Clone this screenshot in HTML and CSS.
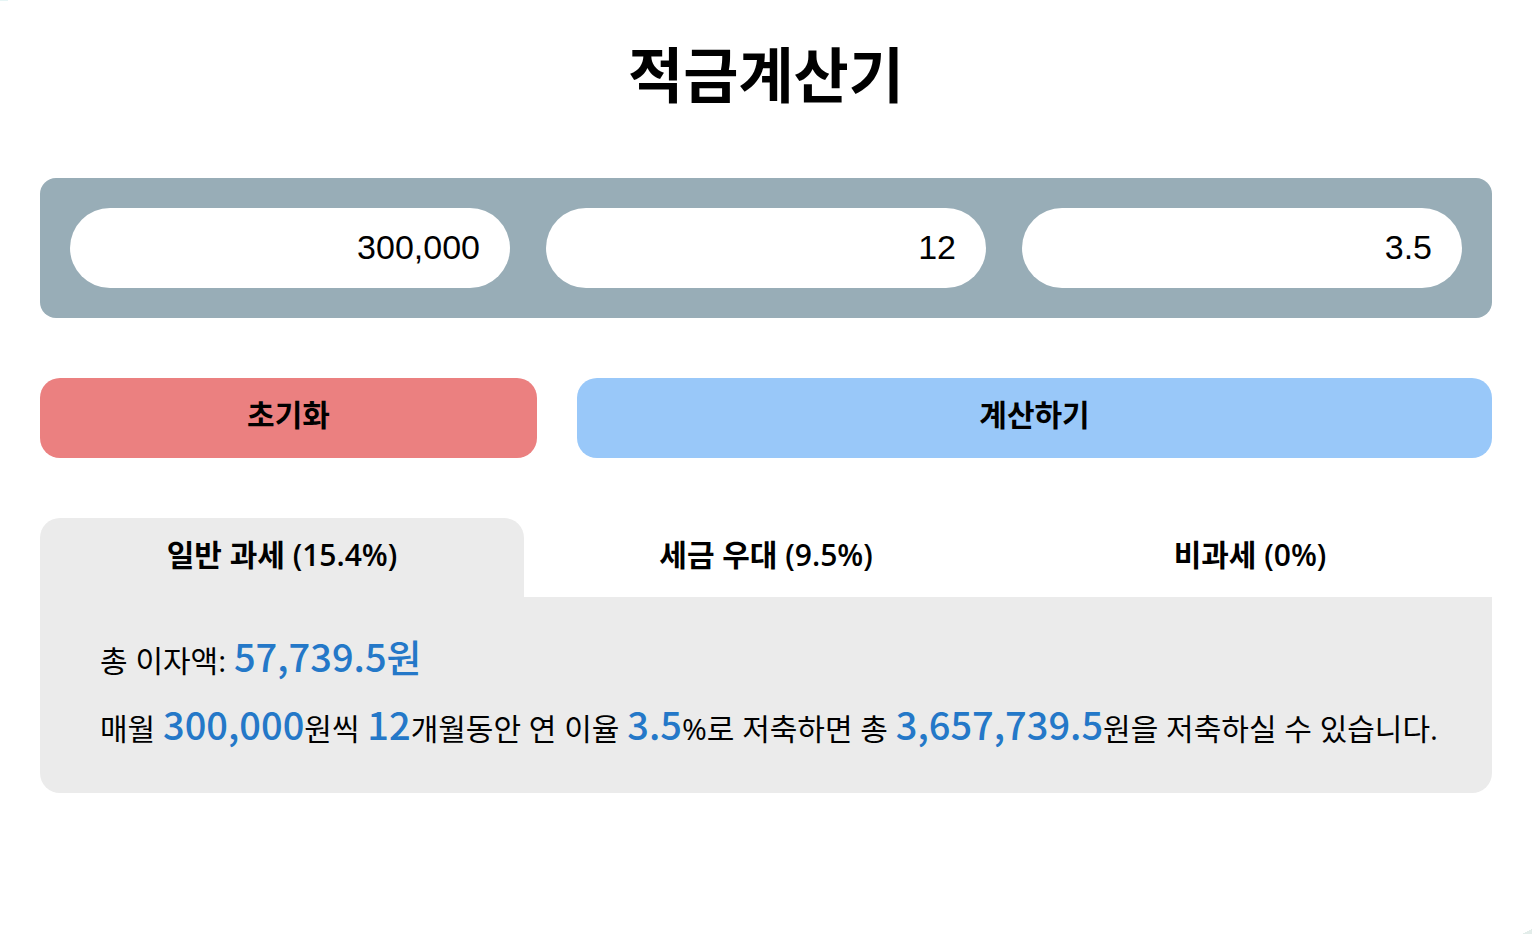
FILE: index.html
```html
<!DOCTYPE html>
<html lang="ko">
<head>
<meta charset="utf-8">
<title>적금계산기</title>
<link rel="stylesheet" href="styles.css">
</head>
<body>
<main class="calculator">
  <h1 class="title">적금계산기</h1>
  <form class="form">
    <div class="fields">
      <input class="field" type="text" aria-label="월 적립액" value="300,000">
      <input class="field" type="text" aria-label="기간(개월)" value="12">
      <input class="field" type="text" aria-label="연 이율" value="3.5">
    </div>
    <div class="actions">
      <button class="button button-reset" type="button">초기화</button>
      <button class="button button-submit" type="button">계산하기</button>
    </div>
  </form>
  <section class="result">
    <div class="tabs" role="tablist">
      <button class="tab tab-active" type="button" role="tab" aria-selected="true">일반 과세 (15.4%)</button>
      <button class="tab" type="button" role="tab" aria-selected="false">세금 우대 (9.5%)</button>
      <button class="tab" type="button" role="tab" aria-selected="false">비과세 (0%)</button>
    </div>
    <div class="panel" role="tabpanel">
      <p class="line">총 이자액: <strong class="value">57,739.5원</strong></p>
      <p class="line">매월 <strong class="value">300,000</strong>원씩 <strong class="value">12</strong>개월동안 연 이율 <strong class="value">3.5</strong>%로 저축하면 총 <strong class="value">3,657,739.5</strong>원을 저축하실 수 있습니다.</p>
    </div>
  </section>
</main>
</body>
</html>
```
FILE: styles.css
```css
* { box-sizing: border-box; }
html { min-height: 100%; }
body {
  margin: 0;
  background:
    linear-gradient(to bottom right, #fff 50%, #e3edea 50%) right bottom / 10px 5px no-repeat fixed,
    linear-gradient(#e6f5f5, #e6f5f5) left top / 8px 1px no-repeat fixed,
    #fff;
  color: #000;
  font-family: "Open Sans", "Noto Sans CJK KR", sans-serif;
}
.calculator { padding: 40px; }
.title {
  margin: 0 0 68px;
  font-size: 60px;
  line-height: 70px;
  font-weight: 700;
  text-align: center;
}
.fields {
  display: grid;
  grid-template-columns: repeat(3, 1fr);
  gap: 36px;
  padding: 30px;
  border-radius: 16px;
  background: #98adb7;
}
.field {
  width: 100%;
  min-width: 0;
  height: 80px;
  padding: 0 30px 2px;
  border: 0;
  border-radius: 40px;
  background: #fff;
  color: #000;
  font: 34px "Liberation Sans", Arial, sans-serif;
  text-align: right;
}
.actions {
  display: grid;
  grid-template-columns: 497fr 915fr;
  gap: 40px;
  margin: 60px 0;
}
.button, .tab {
  height: 80px;
  padding: 0 0 10px;
  border: 0;
  color: #000;
  font-family: inherit;
  font-size: 30px;
  font-weight: 700;
}
.button { border-radius: 20px; }
.button-reset { background: #eb8080; }
.button-submit { background: #99c8f9; }
.tabs {
  display: grid;
  grid-template-columns: repeat(3, 1fr);
}
.tab {
  height: 79px;
  border-radius: 20px 20px 0 0;
  background: transparent;
  font-weight: 600;
}
.tab-active { background: #ebebeb; }
.panel {
  padding: 30px 60px;
  border-radius: 0 0 20px 20px;
  background: #ebebeb;
}
.line {
  margin: 0 -20px 0 0;
  font-size: 30px;
  line-height: 68px;
}
.value {
  color: #2478c8;
  font-family: "Noto Sans CJK KR", sans-serif;
  font-size: 38px;
  line-height: 1;
  font-weight: 500;
}
```
